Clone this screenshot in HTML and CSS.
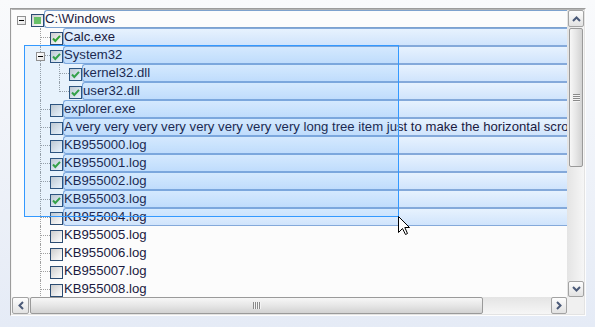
FILE: index.html
```html
<!DOCTYPE html>
<html>
<head>
<meta charset="utf-8">
<link rel="stylesheet" href="styles.css">
</head>
<body>
<div class="tree">
  <div class="tree-in">
    <div class="viewport">
      <div class="row">
        <span class="g"><span class="exp"></span></span>
        <span class="cb ind"><span class="sq"></span></span>
        <span class="lbl focus">C:\Windows</span>
      </div>
      <div class="row">
        <span class="g"></span><span class="g t"></span>
        <span class="cb"><svg class="chk" width="11" height="11" viewBox="0 0 11 11"><path d="M2 5.5 L4.3 8 L9 2.8"/></svg></span>
        <span class="lbl sel">Calc.exe</span>
      </div>
      <div class="row">
        <span class="g"></span><span class="g t"><span class="exp"></span></span>
        <span class="cb"><svg class="chk" width="11" height="11" viewBox="0 0 11 11"><path d="M2 5.5 L4.3 8 L9 2.8"/></svg></span>
        <span class="lbl sel">System32</span>
      </div>
      <div class="row">
        <span class="g"></span><span class="g v"></span><span class="g t"></span>
        <span class="cb"><svg class="chk" width="11" height="11" viewBox="0 0 11 11"><path d="M2 5.5 L4.3 8 L9 2.8"/></svg></span>
        <span class="lbl sel">kernel32.dll</span>
      </div>
      <div class="row">
        <span class="g"></span><span class="g v"></span><span class="g l"></span>
        <span class="cb"><svg class="chk" width="11" height="11" viewBox="0 0 11 11"><path d="M2 5.5 L4.3 8 L9 2.8"/></svg></span>
        <span class="lbl sel">user32.dll</span>
      </div>
      <div class="row">
        <span class="g"></span><span class="g t"></span>
        <span class="cb"></span>
        <span class="lbl sel">explorer.exe</span>
      </div>
      <div class="row">
        <span class="g"></span><span class="g t"></span>
        <span class="cb"></span>
        <span class="lbl sel">A very very very very very very very very long tree item just to make the horizontal scrollbar appear</span>
      </div>
      <div class="row">
        <span class="g"></span><span class="g t"></span>
        <span class="cb"></span>
        <span class="lbl sel">KB955000.log</span>
      </div>
      <div class="row">
        <span class="g"></span><span class="g t"></span>
        <span class="cb"><svg class="chk" width="11" height="11" viewBox="0 0 11 11"><path d="M2 5.5 L4.3 8 L9 2.8"/></svg></span>
        <span class="lbl sel">KB955001.log</span>
      </div>
      <div class="row">
        <span class="g"></span><span class="g t"></span>
        <span class="cb"></span>
        <span class="lbl sel">KB955002.log</span>
      </div>
      <div class="row">
        <span class="g"></span><span class="g t"></span>
        <span class="cb"><svg class="chk" width="11" height="11" viewBox="0 0 11 11"><path d="M2 5.5 L4.3 8 L9 2.8"/></svg></span>
        <span class="lbl sel">KB955003.log</span>
      </div>
      <div class="row">
        <span class="g"></span><span class="g t"></span>
        <span class="cb"></span>
        <span class="lbl sel">KB955004.log</span>
      </div>
      <div class="row">
        <span class="g"></span><span class="g t"></span>
        <span class="cb"></span>
        <span class="lbl">KB955005.log</span>
      </div>
      <div class="row">
        <span class="g"></span><span class="g t"></span>
        <span class="cb"></span>
        <span class="lbl">KB955006.log</span>
      </div>
      <div class="row">
        <span class="g"></span><span class="g t"></span>
        <span class="cb"></span>
        <span class="lbl">KB955007.log</span>
      </div>
      <div class="row">
        <span class="g"></span><span class="g t"></span>
        <span class="cb"></span>
        <span class="lbl">KB955008.log</span>
      </div>
      <div class="band"></div>
      <svg class="cursor" width="13" height="20" viewBox="0 0 13 20"><path d="M0.5 0.5 L0.5 16.5 L4.5 12.5 L7.5 18.5 L9.5 17.5 L6.8 11.5 L11.5 11.5 Z"/></svg>
    </div>
    <div class="vbar">
      <div class="btn up"><svg width="9" height="6" viewBox="0 0 9 6"><path d="M1 5 L4.5 1.5 L8 5"/></svg></div>
      <div class="vthumb"><span class="vgrip"></span></div>
      <div class="track"></div>
      <div class="btn down"><svg width="9" height="6" viewBox="0 0 9 6"><path d="M1 1 L4.5 4.5 L8 1"/></svg></div>
    </div>
    <div class="hbar">
      <div class="btn left"><svg width="6" height="9" viewBox="0 0 6 9"><path d="M5 1 L1.5 4.5 L5 8"/></svg></div>
      <div class="hthumb"><span class="hgrip"></span></div>
      <div class="track"></div>
      <div class="btn right"><svg width="6" height="9" viewBox="0 0 6 9"><path d="M1 1 L4.5 4.5 L1 8"/></svg></div>
    </div>
    <div class="corner"></div>
  </div>
</div>
</body>
</html>
```

FILE: styles.css
```css
html, body {
  margin: 0;
  padding: 0;
}
body {
  width: 595px;
  height: 327px;
  overflow: hidden;
  background: linear-gradient(#f9fafc, #e5ebf6);
  font-family: "Liberation Sans", Arial, sans-serif;
}
.tree {
  margin: 8px 0 0 10px;
  width: 574px;
  height: 306px;
  border: 1px solid;
  border-color: #9c9c9c #fdfdfd #fdfdfd #9c9c9c;
}
.tree-in {
  width: 572px;
  height: 304px;
  border: 1px solid;
  border-color: #b4b4b4 #e3e3e3 #e3e3e3 #f4f4f4;
  display: grid;
  grid-template-columns: 555px 17px;
  grid-template-rows: 287px 17px;
  background: #fcfcfc;
}
.viewport {
  position: relative;
  overflow: hidden;
  display: flex;
  flex-direction: column;
}
.row {
  display: flex;
  height: 18px;
  flex: none;
}
.g {
  width: 19px;
  height: 18px;
  flex: none;
  position: relative;
}
.g.v::before, .g.t::before, .g.l::before {
  content: "";
  position: absolute;
  left: 9px;
  top: 0;
  height: 18px;
  border-left: 1px dotted #a0a0a0;
}
.g.l::before {
  height: 10px;
}
.g.t::after, .g.l::after {
  content: "";
  position: absolute;
  left: 10px;
  top: 9px;
  width: 9px;
  border-top: 1px dotted #a0a0a0;
}
.exp {
  position: absolute;
  left: 5px;
  top: 6px;
  width: 9px;
  height: 9px;
  box-sizing: border-box;
  border: 1px solid #919191;
  background: linear-gradient(135deg, #ffffff, #e4e4e4);
  z-index: 1;
}
.exp::after {
  content: "";
  position: absolute;
  left: 1px;
  top: 3px;
  width: 5px;
  height: 1px;
  background: #000;
}
.cb {
  width: 13px;
  height: 13px;
  margin-top: 4px;
  flex: none;
  box-sizing: border-box;
  border: 1px solid #2c4c72;
  background: linear-gradient(135deg, #cdcdcd, #f0f0f0 70%, #fbfbfb);
  display: flex;
  align-items: center;
  justify-content: center;
  position: relative;
}
.chk path {
  fill: none;
  stroke: #35a235;
  stroke-width: 2;
}
.cb.ind .sq {
  width: 7px;
  height: 7px;
  background: #68c068;
}
.lbl {
  flex: 1;
  min-width: 0;
  height: 18px;
  box-sizing: border-box;
  border: 1px solid transparent;
  border-right: 0;
  border-radius: 3px 0 0 3px;
  line-height: 16px;
  font-size: 13.15px;
  color: #1a1a40;
  white-space: nowrap;
  overflow: hidden;
}
.lbl.sel {
  border-color: #84a9da;
  background: linear-gradient(#e7f2fe, #d0e4fc);
}
.lbl.focus {
  border-color: #7da2ce;
  background: #fcfcfc;
}
.band {
  position: absolute;
  left: 12px;
  top: 35px;
  width: 375px;
  height: 172px;
  box-sizing: border-box;
  border: 1px solid #3399ff;
  background: rgba(51, 153, 255, 0.1);
}
.cursor {
  position: absolute;
  left: 386px;
  top: 206px;
}
.cursor path {
  fill: #fff;
  stroke: #000;
  stroke-width: 1;
}
.vbar {
  display: flex;
  flex-direction: column;
  padding-left: 1px;
  background: linear-gradient(to right, #e4e4e4, #f6f6f6);
}
.hbar {
  display: flex;
  background: linear-gradient(#e4e4e4, #f6f6f6);
}
.btn {
  box-sizing: border-box;
  border: 1px solid #a3a3a3;
  border-radius: 2px;
  background: linear-gradient(#fdfdfd, #e2e2e2);
  display: flex;
  align-items: center;
  justify-content: center;
  flex: none;
}
.btn path {
  fill: none;
  stroke: #4b5a78;
  stroke-width: 2;
}
.btn.up { height: 17px; }
.btn.down { height: 16px; }
.btn.left { width: 17px; }
.btn.right { width: 16px; }
.track {
  flex: 1;
}
.vthumb {
  height: 139px;
  margin: 1px 0 0 1px;
  width: 14px;
  box-sizing: border-box;
  border: 1px solid #9a9a9a;
  border-radius: 2px;
  background: linear-gradient(to right, #f7f7f7, #e6e6e6 50%, #d2d2d2);
  display: flex;
  align-items: center;
  justify-content: center;
  flex: none;
}
.vgrip {
  width: 7px;
  height: 8px;
  background: repeating-linear-gradient(#8a8a8a 0 1px, #f4f4f4 1px 2px);
}
.hthumb {
  width: 453px;
  margin-left: 1px;
  box-sizing: border-box;
  border: 1px solid #9a9a9a;
  border-radius: 2px;
  background: linear-gradient(#f7f7f7, #e6e6e6 50%, #d2d2d2);
  display: flex;
  align-items: center;
  justify-content: center;
  flex: none;
}
.hgrip {
  width: 8px;
  height: 7px;
  background: repeating-linear-gradient(to right, #8a8a8a 0 1px, #f4f4f4 1px 2px);
}
.corner {
  background: #f0f0f0;
}
```
